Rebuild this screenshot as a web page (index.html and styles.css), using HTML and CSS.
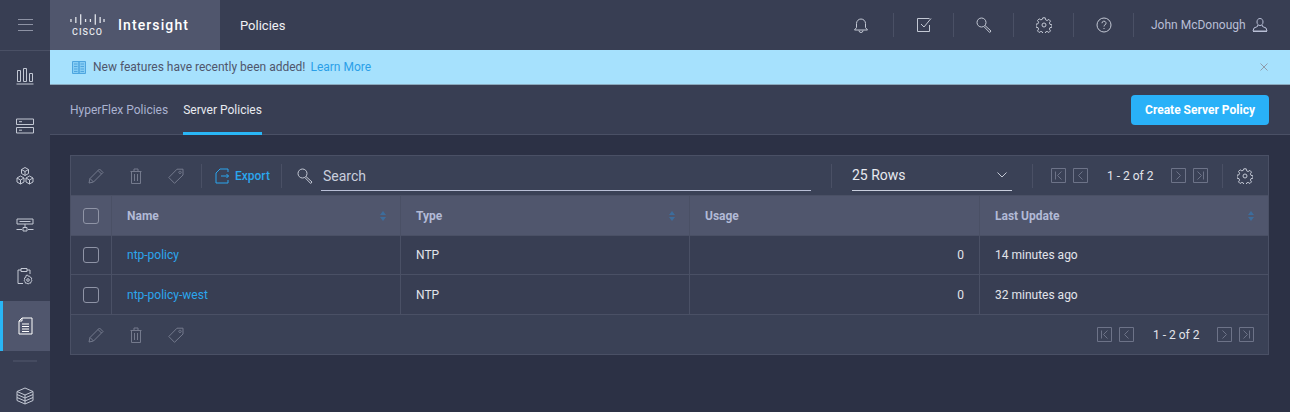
FILE: index.html
```html
<!DOCTYPE html>
<html lang="en">
<head>
    <meta charset="UTF-8">
    <title>Intersight - Policies</title>
    <link rel="stylesheet" href="styles.css">
</head>
<body>
    <svg class="sprites" width="0" height="0">
        <symbol id="i-pencil" viewBox="0 0 16 16"><path d="M1 15l1-4.500L11.500 1 15 4.500 5.500 14zM2 10.500L5.500 14M10 2.500L13.500 6"/></symbol>
        <symbol id="i-trash" viewBox="0 0 16 16"><path d="M2.500 3.500h11M6 3.500V1h4v2.500M3.500 3.500V15.500h9V3.500M6.500 6v7M9.500 6v7"/></symbol>
        <symbol id="i-tag" viewBox="0 0 16 16"><path d="M.8 9.500L9 1.200h6V7l-8.500 8.300zM12 3.200a1.200 1.200 0 1 0 .01 0"/></symbol>
        <symbol id="i-key" viewBox="0 0 16 16"><circle cx="5.500" cy="5.500" r="4.500"/><path d="M9 8.500l6 5.500-1.300 1.500-5.700-5.800"/></symbol>
        <symbol id="i-gear" viewBox="0 0 16 16"><circle cx="8" cy="8" r="2"/><path d="M6.800.8h2.400l.4 2 1.500.7 1.800-1.100 1.600 1.700-1.100 1.700.6 1.600 2 .4v2.400l-2 .4-.6 1.500 1.100 1.800-1.600 1.600-1.800-1.100-1.500.6-.4 2H6.800l-.4-2-1.500-.6-1.800 1.100-1.600-1.600 1.100-1.800-.6-1.500-2-.4V7.200l2-.4.6-1.600-1.100-1.700 1.600-1.700 1.800 1.100 1.500-.7z"/></symbol>
        <symbol id="i-first" viewBox="0 0 15 15"><path d="M.5.500h14v14H.500zM4.500 3.500v8M10.500 3.500l-4 4 4 4"/></symbol>
        <symbol id="i-prev" viewBox="0 0 15 15"><path d="M.5.500h14v14H.500zM9.500 3.500l-4 4 4 4"/></symbol>
        <symbol id="i-next" viewBox="0 0 15 15"><path d="M.5.500h14v14H.500zM5.500 3.500l4 4-4 4"/></symbol>
        <symbol id="i-last" viewBox="0 0 15 15"><path d="M.5.500h14v14H.500zM10.500 3.500v8M4.500 3.500l4 4-4 4"/></symbol>
    </svg>

    <aside class="sidebar">
        <div class="side-menu">
            <svg class="side-icon" viewBox="0 0 15 12"><path d="M0 .5h15M0 5.500h15M0 11.500h15"/></svg>
        </div>
        <div class="side-item">
            <svg class="side-icon" viewBox="0 0 18 18"><path d="M1.500 3.500h3v11h-3zM7.500 1.500h3v13h-3zM13.500 6.500h3v8h-3zM.5 17h17"/></svg>
        </div>
        <div class="side-item">
            <svg class="side-icon" viewBox="0 0 18 16"><path d="M.5 1h17v5.500H.5zM.5 9.500h17V15H.5zM3 3.700h3M3 12.200h3"/></svg>
        </div>
        <div class="side-item">
            <svg class="side-icon" viewBox="0 0 18 18"><path d="M9 .5l3.500 2v4L9 8.500l-3.500-2v-4zM4.500 9l3.500 2v4l-3.500 2L1 15v-4zM13.500 9l3.500 2v4l-3.500 2-3.500-2v-4zM5.500 2.500L9 4.500l3.500-2M9 4.500v4M1 11l3.500 2L8 11M4.500 13v4M10 11l3.500 2 3.500-2M13.500 13v4"/></svg>
        </div>
        <div class="side-item">
            <svg class="side-icon" viewBox="0 0 18 16"><path d="M1 1h16v5H1zM3.500 3.500h11M9 6v3M.5 11.500h5.500M12 11.500h5.500M7 9.500h4v3.500H7z"/></svg>
        </div>
        <div class="side-item">
            <svg class="side-icon" viewBox="0 0 18 18"><path d="M7 16.500H2V3h3M11 3h3v4M5 1.500h6v3H5zM10 8.500l1.500-.5.700 1.200 1.400-.1.700 1.300 1.400.6-.3 1.500.6 1.200-1.100 1-.2 1.400-1.500.1-1.100.8-1.200-.8-1.500-.1-.2-1.400-1.100-1 .6-1.200-.3-1.500 1.400-.6z"/><circle cx="12" cy="13" r="1.300"/></svg>
        </div>
        <div class="side-item active">
            <svg class="side-icon" viewBox="0 0 18 18"><path d="M6 1h10v16H3V4zM6 1v3H3M6 7h7M6 9.500h7M6 12h7M6 14.500h7"/></svg>
        </div>
        <div class="side-sep"></div>
        <div class="side-item">
            <svg class="side-icon" viewBox="0 0 18 18"><path d="M9 1l8 3.500v9L9 17l-8-3.500v-9zM1 4.500L9 8l8-3.500M1 7.500L9 11l8-3.500M1 10.500L9 14l8-3.500M9 8v9"/></svg>
        </div>
    </aside>

    <div class="main">
        <header class="topbar">
            <div class="brand">
                <div class="cisco">
                    <svg class="cisco-bars" viewBox="0 0 36 11"><path d="M1 5v3M6 3v6M11 0v11M16 5v3M21 5v3M26 0v11M31 3v6M35 5v3"/></svg>
                    <span class="cisco-name">CISCO</span>
                </div>
                <span class="brand-name">Intersight</span>
            </div>
            <div class="page-title">Policies</div>
            <nav class="top-actions">
                <div class="top-btn bell">
                    <svg class="top-icon" viewBox="0 0 16 16"><path d="M1.500 13h13l-2-2.500V6.500a4.500 4.500 0 0 0-9 0v4zM6 13.500a2 2 0 0 0 4 0"/></svg>
                </div>
                <div class="top-btn">
                    <svg class="top-icon" viewBox="0 0 16 16"><path d="M13.500 8v6.500h-12v-13h12M5 7l3 3 7-8.500"/></svg>
                </div>
                <div class="top-btn"><svg class="top-icon"><use href="#i-key"/></svg></div>
                <div class="top-btn"><svg class="top-icon"><use href="#i-gear"/></svg></div>
                <div class="top-btn">
                    <svg class="top-icon" viewBox="0 0 16 16"><circle cx="8" cy="8" r="7"/><path d="M6 6.200a2 2 0 1 1 3 1.700c-.7.400-1 .8-1 1.600M8 11v1"/></svg>
                </div>
                <div class="user">
                    <span>John McDonough</span>
                    <svg class="top-icon" viewBox="0 0 16 16"><path d="M8 1.500c-2 0-3 1.500-3 3.500s1.200 3.500 3 3.500 3-1.500 3-3.500-1-3.500-3-3.500zM5.800 8l-.3 1.500-3.500 1.500-1 3h14l-1-3-3.500-1.500L10.200 8M1 14.500h14"/></svg>
                </div>
            </nav>
        </header>

        <div class="banner">
            <svg class="banner-icon" viewBox="0 0 14 13"><path class="pages" d="M.5.500h6.500v12H.500zM7 .5h6.500v12H7z"/><path d="M2 3h3.500M2 5.500h3.500M2 8h3.500M2 10.500h3.500M8.500 3H12M8.500 5.500H12M8.500 8H12M8.500 10.500H12"/></svg>
            <span class="banner-text">New features have recently been added!</span>
            <span class="banner-link">Learn More</span>
            <svg class="banner-close" viewBox="0 0 8 8"><path d="M.5.500l7 7M7.500.500l-7 7"/></svg>
        </div>

        <div class="tabs">
            <div class="tab">HyperFlex Policies</div>
            <div class="tab selected">Server Policies</div>
            <button class="create-btn">Create Server Policy</button>
        </div>

        <section class="content">
            <div class="panel">
                <div class="toolbar">
                    <div class="tools">
                        <svg class="tool"><use href="#i-pencil"/></svg>
                        <svg class="tool"><use href="#i-trash"/></svg>
                        <svg class="tool"><use href="#i-tag"/></svg>
                    </div>
                    <div class="vsep"></div>
                    <div class="export">
                        <svg class="export-icon" viewBox="0 0 14 16"><path d="M13 12v3H1V5l4-4h8v3M6 8h7.500M11.500 6l2 2-2 2"/></svg>
                        <span>Export</span>
                    </div>
                    <div class="vsep"></div>
                    <div class="search">
                        <svg class="search-icon"><use href="#i-key"/></svg>
                        <div class="search-field">Search</div>
                    </div>
                    <div class="vsep"></div>
                    <div class="rows-select">
                        <span>25 Rows</span>
                        <svg class="chevron" viewBox="0 0 10 6"><path d="M.5.500L5 5 9.500.500"/></svg>
                    </div>
                    <div class="vsep"></div>
                    <div class="pager">
                        <svg class="pg"><use href="#i-first"/></svg>
                        <svg class="pg"><use href="#i-prev"/></svg>
                        <span class="pg-text">1 - 2 of 2</span>
                        <svg class="pg"><use href="#i-next"/></svg>
                        <svg class="pg"><use href="#i-last"/></svg>
                    </div>
                    <div class="vsep"></div>
                    <svg class="table-gear"><use href="#i-gear"/></svg>
                </div>

                <div class="row head">
                    <div class="cell check"><span class="box"></span></div>
                    <div class="cell">Name<span class="sort"></span></div>
                    <div class="cell">Type<span class="sort"></span></div>
                    <div class="cell">Usage</div>
                    <div class="cell">Last Update<span class="sort"></span></div>
                </div>
                <div class="row">
                    <div class="cell check"><span class="box"></span></div>
                    <div class="cell link">ntp-policy</div>
                    <div class="cell">NTP</div>
                    <div class="cell num">0</div>
                    <div class="cell">14 minutes ago</div>
                </div>
                <div class="row">
                    <div class="cell check"><span class="box"></span></div>
                    <div class="cell link">ntp-policy-west</div>
                    <div class="cell">NTP</div>
                    <div class="cell num">0</div>
                    <div class="cell">32 minutes ago</div>
                </div>

                <div class="toolbar foot">
                    <div class="tools">
                        <svg class="tool"><use href="#i-pencil"/></svg>
                        <svg class="tool"><use href="#i-trash"/></svg>
                        <svg class="tool"><use href="#i-tag"/></svg>
                    </div>
                    <div class="pager">
                        <svg class="pg"><use href="#i-first"/></svg>
                        <svg class="pg"><use href="#i-prev"/></svg>
                        <span class="pg-text">1 - 2 of 2</span>
                        <svg class="pg"><use href="#i-next"/></svg>
                        <svg class="pg"><use href="#i-last"/></svg>
                    </div>
                </div>
            </div>
        </section>
    </div>
</body>
</html>
```

FILE: styles.css
```css
* {
    margin: 0;
    padding: 0;
    box-sizing: border-box;
}

html, body {
    height: 100%;
    overflow: hidden;
}

body {
    display: flex;
    background-color: #2c3145;
    color: #ffffff;
    font-family: Roboto, "Liberation Sans", sans-serif;
    font-size: 13px;
}

svg {
    fill: none;
    stroke: currentColor;
    stroke-width: 1;
    flex: none;
}

.sprites {
    position: absolute;
}

/* sidebar */
.sidebar {
    width: 50px;
    flex: none;
    background-color: #383e53;
    color: #c3c8d4;
}

.side-menu {
    height: 51px;
    display: flex;
    align-items: center;
    justify-content: center;
    border-bottom: 1px solid #4a5065;
    color: #8d92a4;
    padding-bottom: 1px;
}

.side-menu .side-icon {
    width: 15px;
    height: 12px;
}

.side-item {
    height: 50px;
    display: flex;
    align-items: center;
    justify-content: center;
}

.side-icon {
    width: 18px;
    height: 18px;
}

.side-item.active {
    background-color: #50566d;
    border-left: 3px solid #29b6f6;
    padding-right: 3px;
    color: #ffffff;
}

.side-sep {
    width: 24px;
    height: 2px;
    margin: 9px auto;
    background-color: #454b60;
}

/* top */
.main {
    flex: 1;
    min-width: 0;
}

.topbar {
    height: 50px;
    display: flex;
    align-items: center;
    background-color: #383e53;
}

.brand {
    width: 170px;
    height: 100%;
    display: flex;
    align-items: center;
    padding-left: 20px;
    background-color: #50566d;
}

.cisco {
    width: 35px;
    display: flex;
    flex-direction: column;
    align-items: center;
    color: #e4e6ec;
}

.cisco-bars {
    width: 35px;
    height: 11px;
    stroke-width: 1.3;
}

.cisco-name {
    font-size: 9px;
    font-weight: 500;
    letter-spacing: 1px;
    line-height: 10px;
    margin-top: 2px;
}

.brand-name {
    margin-left: 13px;
    font-size: 14px;
    font-weight: 500;
    letter-spacing: 1.1px;
}

.page-title {
    margin-left: 20px;
    font-size: 13px;
    color: #f0f1f5;
}

.top-actions {
    margin-left: auto;
    height: 24px;
    display: flex;
    align-items: center;
    color: #c3c8d4;
}

.top-btn {
    width: 60px;
    height: 100%;
    display: flex;
    align-items: center;
    justify-content: center;
    border-right: 1px solid #4a5065;
}

.top-btn.bell {
    padding-right: 6px;
}

.top-icon {
    width: 16px;
    height: 16px;
}

.user {
    width: 156px;
    display: flex;
    align-items: center;
    gap: 6px;
    padding-left: 17px;
    font-size: 12px;
    color: #b9bfd6;
}

/* banner */
.banner {
    height: 35px;
    display: flex;
    align-items: center;
    padding: 0 22px;
    background-color: #a6e1fd;
    border-bottom: 1px solid #8aa9bd;
    font-size: 12px;
}

.banner-icon {
    width: 14px;
    height: 13px;
    color: #4ea6e0;
}

.banner-icon .pages {
    fill: #86cdf4;
}

.banner-text {
    margin-left: 7px;
    color: #4f566c;
}

.banner-link {
    margin-left: 5px;
    color: #2a9fe8;
}

.banner-close {
    margin-left: auto;
    width: 8px;
    height: 8px;
    color: #8f9bab;
}

/* tabs */
.tabs {
    height: 50px;
    display: flex;
    align-items: stretch;
    gap: 15px;
    padding: 0 21px 0 20px;
    background-color: #383e53;
    border-bottom: 1px solid #4a5065;
}

.tab {
    line-height: 51px;
    font-size: 12px;
    color: #aab2d0;
}

.tab.selected {
    color: #e8eaf0;
    border-bottom: 3px solid #29b6f6;
    margin-bottom: -1px;
}

.create-btn {
    margin: 10px 0 9px auto;
    width: 138px;
    border: none;
    border-radius: 4px;
    background-color: #29b1f8;
    color: #ffffff;
    font-family: inherit;
    font-size: 12px;
    font-weight: 700;
}

/* table */
.content {
    padding: 20px 21px 0 20px;
}

.panel {
    border: 1px solid #4a5065;
    background-color: #383e53;
}

.toolbar {
    height: 39px;
    display: flex;
    align-items: center;
    background-color: #3a4156;
    color: #747a8d;
}

.tools {
    display: flex;
    align-items: center;
    gap: 24px;
    padding-left: 17px;
    padding-right: 17px;
}

.tool {
    width: 16px;
    height: 16px;
}

.vsep {
    width: 1px;
    height: 24px;
    background-color: #4a5065;
    flex: none;
}

.export {
    width: 79px;
    display: flex;
    align-items: center;
    gap: 6px;
    padding-left: 13px;
    color: #2ba6ee;
    font-size: 12px;
    font-weight: 500;
}

.export-icon {
    width: 14px;
    height: 16px;
}

.search {
    width: 549px;
    display: flex;
    align-items: center;
    padding-left: 15px;
}

.search-icon {
    width: 16px;
    height: 16px;
    color: #c3c8d4;
}

.search-field {
    width: 490px;
    height: 30px;
    margin-left: 8px;
    padding: 7px 2px 0;
    border-bottom: 1px solid #b9bfd6;
    font-size: 14px;
    color: #c9cedd;
}

.rows-select {
    width: 160px;
    height: 30px;
    display: flex;
    align-items: center;
    justify-content: space-between;
    margin: 0 20px;
    border-bottom: 1px solid #c9cedd;
    padding-right: 5px;
    font-size: 14px;
    color: #e8eaf0;
}

.chevron {
    width: 10px;
    height: 6px;
    color: #c3c8d4;
}

.pager {
    display: flex;
    align-items: center;
    gap: 7px;
    padding: 0 14px 0 18px;
    color: #6d7388;
}

.pg {
    width: 15px;
    height: 15px;
}

.pg-text {
    width: 46px;
    margin: 0 11px 0 12px;
    white-space: nowrap;
    font-size: 12px;
    color: #e2e4ea;
}

.table-gear {
    width: 16px;
    height: 16px;
    margin-left: 14px;
    color: #c3c8d4;
}

.foot {
    justify-content: space-between;
    height: 39px;
    border-top: 1px solid #4a5065;
    box-sizing: content-box;
}

.row {
    display: grid;
    grid-template-columns: 40px 289px 289px 290px 1fr;
    height: 40px;
    border-top: 1px solid #4a5065;
    font-size: 12px;
    color: #e2e4ea;
}

.head + .row {
    height: 39px;
}

.cell {
    display: flex;
    align-items: center;
    padding: 0 15px;
    border-left: 1px solid #4a5065;
}

.cell:first-child {
    border-left: none;
}

.check {
    justify-content: center;
    padding: 0;
}

.box {
    width: 16px;
    height: 16px;
    border: 1px solid #8f94a6;
    border-radius: 3px;
}

.head {
    background-color: #50566d;
    color: #b2bad6;
    font-weight: 700;
}

.sort {
    margin-left: auto;
    margin-right: -1px;
    width: 6px;
    height: 10px;
    position: relative;
}

.sort::before,
.sort::after {
    content: "";
    position: absolute;
    left: 0;
    border-left: 3px solid transparent;
    border-right: 3px solid transparent;
}

.sort::before {
    top: 0;
    border-bottom: 4px solid #3d6d9c;
}

.sort::after {
    bottom: 0;
    border-top: 4px solid #3d6d9c;
}

.link {
    color: #2ba6ee;
}

.num {
    justify-content: flex-end;
}
```
